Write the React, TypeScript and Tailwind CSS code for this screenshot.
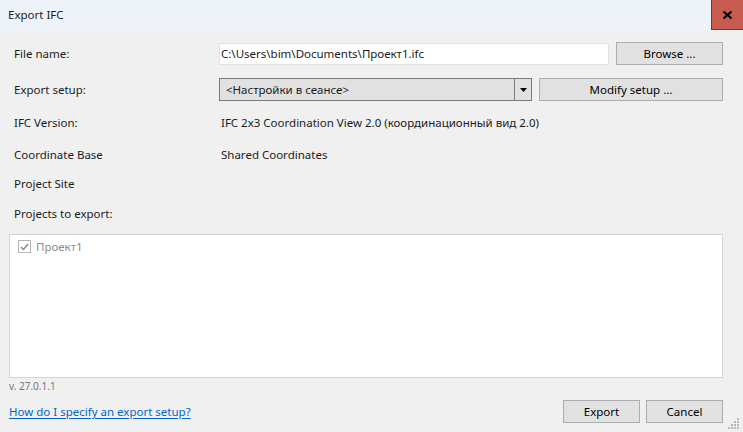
import React from 'react'

const FONT = { fontFamily: '"Segoe UI", "Noto Sans", sans-serif' }

function Row({ label, children, className = '' }: { label: string; children?: React.ReactNode; className?: string }) {
  return (
    <div className={`flex items-center ${className}`}>
      <div className="w-[205px] shrink-0">{label}</div>
      <div className="flex-1 flex items-center">{children}</div>
    </div>
  )
}

function Btn({ children, className = '' }: { children: React.ReactNode; className?: string }) {
  return (
    <div className={`h-[23px] flex items-center justify-center bg-[#e1e1e1] border border-[#adadad] text-[#000] ${className}`}>
      {children}
    </div>
  )
}

// size grip dots in the window corner
const GRIP = [[9, 1], [6, 4], [9, 4], [3, 7], [6, 7], [9, 7], [0, 10], [3, 10], [6, 10], [9, 10]]

export default function App() {
  return (
    <div className="relative w-[743px] h-[432px] bg-[#f0f0f0] text-[11.5px] text-[#1a1a1a] flex flex-col overflow-hidden" style={FONT}>
      <div className="h-[30px] bg-[#eef3fa] flex items-center shrink-0">
        <div className="pl-[8px] flex-1">Export IFC</div>
        <div className="w-[32px] h-[30px] bg-[#c75b50] border-l border-b border-[#6b3b36] flex items-center justify-center">
          <svg width="11" height="10" viewBox="0 0 11 10">
            <path d="M1.5 1.5 L9.5 8.5 M9.5 1.5 L1.5 8.5" stroke="#000" strokeWidth="2.2" />
          </svg>
        </div>
      </div>

      <div className="flex-1 flex flex-col pl-[14px] pr-[20px]">
        <Row label="File name:" className="mt-[12px]">
          <div className="h-[22px] w-[390px] bg-white border border-[#e3e3e3] flex items-center pl-[1px]">
            C:\Users\bim\Documents\Проект1.ifc
          </div>
          <Btn className="ml-[7px] w-[107px]">Browse ...</Btn>
        </Row>

        <Row label="Export setup:" className="mt-[13px]">
          <div className="h-[23px] w-[313px] bg-[#e1e1e1] border border-[#7a7a7a] flex items-stretch">
            <div className="flex-1 flex items-center pl-[6px]">&lt;Настройки в сеансе&gt;</div>
            <div className="w-[17px] border-l border-[#7a7a7a] flex items-center justify-center">
              <svg width="7" height="4" viewBox="0 0 7 4"><path d="M0 0 H7 L3.5 4 Z" fill="#000" /></svg>
            </div>
          </div>
          <Btn className="ml-[7px] w-[184px] border-[#7a7a7a]">Modify setup ...</Btn>
        </Row>

        <Row label="IFC Version:" className="mt-[12px] h-[20px]">
          <span className="pl-[2px]">IFC 2x3 Coordination View 2.0 (координационный вид 2.0)</span>
        </Row>

        <Row label="Coordinate Base" className="mt-[12px] h-[20px]">
          <span className="pl-[2px]">Shared Coordinates</span>
        </Row>

        <Row label="Project Site" className="mt-[9px] h-[20px]" />

        <Row label="Projects to export:" className="mt-[10px] h-[20px]" />

        <div className="mt-[10px] -ml-[5px] h-[144px] bg-white border border-[#d4d4d4] pt-[3px] pl-[8px]">
          <div className="flex items-center gap-[5px] text-[#8c8c8c]">
            <div className="w-[13px] h-[13px] border border-[#b5b5b5] flex items-center justify-center">
              <svg width="9" height="8" viewBox="0 0 9 8"><path d="M1 4 L3.5 6.5 L8 1" stroke="#8a8a8a" strokeWidth="1.5" fill="none" /></svg>
            </div>
            <span>Проект1</span>
          </div>
        </div>

        <div className="-ml-[5px] mt-[1px] text-[10px] text-[#777]">v. 27.0.1.1</div>

        <div className="flex items-center mt-[6px] -ml-[5px]">
          <a className="flex-1 text-[#0066cc] underline underline-offset-2">How do I specify an export setup?</a>
          <Btn className="w-[77px]">Export</Btn>
          <Btn className="ml-[6px] w-[77px]">Cancel</Btn>
        </div>
      </div>

      <svg className="absolute right-[3px] bottom-[3px]" width="12" height="12" viewBox="0 0 12 12">
        {GRIP.map(([x, y], i) => (
          <rect key={i} x={x} y={y} width="2" height="2" fill="#b8b8b8" />
        ))}
      </svg>
    </div>
  )
}
